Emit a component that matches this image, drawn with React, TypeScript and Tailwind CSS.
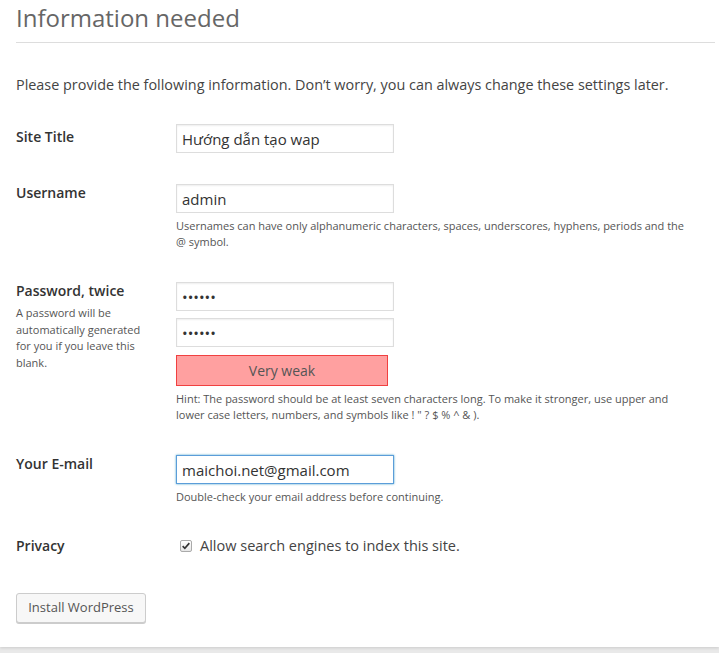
const font = { fontFamily: '"Open Sans", "Liberation Sans", sans-serif' }

function Hint({ children }: { children: React.ReactNode }) {
  return <p className="mt-[5px] text-[11px] leading-[16px] text-[#555]">{children}</p>
}

function TextInput({ value, type = 'text', focus = false }: { value: string; type?: string; focus?: boolean }) {
  return (
    <input
      type={type}
      defaultValue={value}
      readOnly
      className={
        'block h-[29px] w-[218px] border bg-white px-[5px] text-[15px] text-[#333] outline-none ' +
        (focus
          ? 'border-[#5b9dd9] shadow-[0_0_2px_rgba(30,140,190,0.8)]'
          : 'border-[#ddd] shadow-[inset_0_1px_2px_rgba(0,0,0,0.07)]')
      }
    />
  )
}

export default function App() {
  return (
    <div className="min-h-screen bg-[#e9e9e9]" style={font}>
      <div className="bg-white pl-4 pr-1 pb-[24px] text-[14px] text-[#444] shadow-[0_1px_3px_rgba(0,0,0,0.13)]">
        <h1 className="pt-[1px] text-[24px] leading-[33px] text-[#666]">Information needed</h1>
        <div className="mt-[8px] h-px bg-[#ddd]" />

        <p className="mt-[32px] text-[14.4px] leading-[19px]">
          Please provide the following information. Don’t worry, you can always change these settings later.
        </p>

        <div className="mt-[30px] flex items-start">
          <div className="w-[160px] pt-[3px] font-semibold leading-[19px] text-[#333]">Site Title</div>
          <TextInput value="Hướng dẫn tạo wap" />
        </div>

        <div className="mt-[30px] flex items-start">
          <div className="w-[160px] font-semibold leading-[19px] text-[#333]">Username</div>
          <div className="w-[520px] pt-[1px]">
            <TextInput value="admin" />
            <Hint>
              Usernames can have only alphanumeric characters, spaces, underscores, hyphens, periods and the @ symbol.
            </Hint>
          </div>
        </div>

        <div className="mt-[31px] flex items-start">
          <div className="w-[160px] pr-[20px]">
            <div className="font-semibold leading-[19px] text-[#333]">Password, twice</div>
            <p className="mt-[5px] text-[11px] leading-[16.5px] text-[#555]">
              A password will be automatically generated for you if you leave this blank.
            </p>
          </div>
          <div className="w-[520px] pt-[1px]">
            <TextInput type="password" value="123456" />
            <div className="mt-[7px]">
              <TextInput type="password" value="123456" />
            </div>
            <div className="mt-[8px] flex h-[31px] w-[212px] items-center justify-center border border-[#f04040] bg-[#ffa0a0] text-[14px] text-[#555]">
              Very weak
            </div>
            <Hint>
              Hint: The password should be at least seven characters long. To make it stronger, use upper and lower
              case letters, numbers, and symbols like ! " ? $ % ^ &amp; ).
            </Hint>
          </div>
        </div>

        <div className="mt-[31px] flex items-start">
          <div className="w-[160px] font-semibold leading-[19px] text-[#333]">Your E-mail</div>
          <div className="w-[520px] pt-[1px]">
            <TextInput value="maichoi.net@gmail.com" focus />
            <p className="mt-[5px] text-[11px] leading-[16px] text-[#555]">
              Double-check your email address before continuing.
            </p>
          </div>
        </div>

        <div className="mt-[31px] flex items-start">
          <div className="w-[160px] font-semibold leading-[19px] text-[#333]">Privacy</div>
          <label className="flex items-center gap-[8px] pl-[4px] text-[14.5px] leading-[19px] text-[#444]">
            <span className="flex h-[12px] w-[12px] items-center justify-center rounded-[2px] border border-[#aaa] bg-gradient-to-b from-white to-[#e6e6e6]">
              <svg viewBox="0 0 12 12" className="h-[10px] w-[10px]">
                <path d="M2 6.2 L4.6 8.8 L10 2.6" fill="none" stroke="#333" strokeWidth="2" />
              </svg>
            </span>
            Allow search engines to index this site.
          </label>
        </div>

        <button className="mt-[38px] h-[30px] w-[130px] rounded-[3px] border border-[#ccc] bg-[#f7f7f7] text-[13px] text-[#555] shadow-[0_1px_0_#ccc]">
          Install WordPress
        </button>
      </div>
    </div>
  )
}
